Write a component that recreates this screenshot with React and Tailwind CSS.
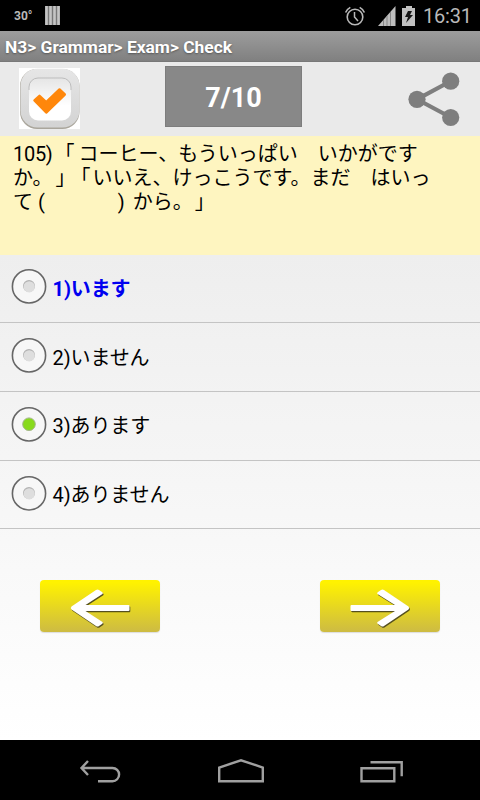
// App.jsx
import React, { useState } from "react";

const OPTIONS = [
  { id: 1, text: "います", correct: true },
  { id: 2, text: "いません" },
  { id: 3, text: "あります" },
  { id: 4, text: "ありません" },
];

function StatusBar() {
  return (
    <div className="flex h-[31px] items-center bg-black text-[#b9b9b9]">
      <span className="ml-[14px] w-[31px] text-[12px] leading-none font-bold">30°</span>
      <svg width="15" height="19" viewBox="0 0 15 19">
        <rect width="15" height="19" fill="#777" />
        <path d="M1.5 0v19M5.5 0v19M9.5 0v19M13.5 0v19" stroke="#c4c4c4" strokeWidth="2.6" />
      </svg>
      <svg className="ml-[284px]" width="22" height="22" viewBox="0 0 22 22" fill="none" stroke="#b9b9b9">
        <circle cx="11" cy="12" r="7.8" strokeWidth="1.6" />
        <path d="M10.5 7v5l3.5 4" strokeWidth="1.5" />
        <path d="M1.6 7.5A10 10 0 0 1 6.3 2.4M15.7 2.4a10 10 0 0 1 4.7 5.1" strokeWidth="1.6" />
      </svg>
      <svg className="ml-[12px]" width="18" height="20" viewBox="0 0 18 20">
        <path d="M17.5 0v20H0z" fill="#bdbdbd" />
        <path d="M5.5 14v6M9 10v10M12.5 6v14" stroke="#858585" />
      </svg>
      <svg className="ml-[6px]" width="14" height="20" viewBox="0 0 14 20">
        <path d="M4 0h6v2h3v18H0V2h4z" fill="#c0c0c0" />
        <path d="M6 5h4L8 9h3l-7 8 2-6H3z" fill="#151515" />
      </svg>
      <span className="ml-[7px] pt-[2px] text-[20px] leading-[29px] tracking-[-0.2px]">16:31</span>
    </div>
  );
}

function Toolbar() {
  return (
    <div className="flex h-[74px] items-start bg-[#eaeaea]">
      <svg className="mt-[6px] ml-[19px]" width="61" height="61" viewBox="0 0 61 61">
        <defs>
          <linearGradient id="frame" x1="0" y1="0" x2="0" y2="1">
            <stop stopColor="#e6e6e6" />
            <stop offset="1" stopColor="#d3d3d3" />
          </linearGradient>
          <linearGradient id="inner" x1="0" y1="0" x2="0" y2="1">
            <stop stopColor="#e5e5e5" />
            <stop offset="0.65" stopColor="#ffffff" />
          </linearGradient>
        </defs>
        <rect width="61" height="61" fill="#fff" />
        <rect x="1" y="1" width="59.5" height="60" rx="17" fill="#aaa69c" />
        <rect x="1.5" y="0.8" width="59" height="58.8" rx="17" fill="url(#frame)" />
        <rect x="10" y="10" width="42" height="42.5" rx="9" fill="url(#inner)" />
        <path d="M10 22V19a9 9 0 0 1 9-9h24a9 9 0 0 1 9 9v3" fill="none" stroke="#bdbdbd" />
        <path d="M15.5 32.5L20.5 27.8L27.2 34.2L40.5 21.5L45.8 26.5L27.2 44.5Z" fill="#ff870b" stroke="#ff870b" strokeWidth="2.5" strokeLinejoin="round" />
      </svg>
      <div className="mt-[4px] ml-[85px] h-[61px] w-[137px] border border-[#7d7d7d] bg-[#888] text-center text-[27px] leading-[62px] font-bold text-white">
        7/10
      </div>
      <svg className="mt-[7px] ml-[105px]" width="54" height="60" viewBox="0 -2 54 60" fill="#7e7e7e">
        <path d="M44 10L10 28.3L44 46.5" fill="none" stroke="#7e7e7e" strokeWidth="4.2" />
        <circle cx="43.7" cy="10.2" r="8.6" />
        <circle cx="10" cy="28.3" r="8.6" />
        <circle cx="43.7" cy="46.5" r="8.6" />
      </svg>
    </div>
  );
}

function Question() {
  return (
    <div className="h-[119px] bg-[#fef5c0] pt-[6px] pl-[13px] text-[20px] leading-[24px] whitespace-pre text-black [text-spacing-trim:space-all]">
      <div>
        <span className="tracking-[-0.3px]">105)</span>
        <span className="ml-[2px] mr-[4px]">「</span>コーヒー、もういっぱい　いかがです
      </div>
      <div>
        か。<span className="ml-[3px] mr-[7px] tracking-[-5px]">」「</span>いいえ、けっこうです。まだ　はいっ
      </div>
      <div>
        て<span className="ml-[5px]">(</span>
        <span className="ml-[73px] mr-[8px]">)</span>から。<span className="ml-[2px]">」</span>
      </div>
    </div>
  );
}

function Radio({ checked }) {
  return (
    <svg width="36" height="36" viewBox="0 0 36 36">
      <circle cx="18" cy="18.4" r="16.6" fill="#f7f7f7" stroke="#666" strokeWidth="1.6" />
      {checked ? (
        <circle cx="18" cy="18.2" r="6.3" fill="#88da1c" stroke="#a3b58a" />
      ) : (
        <>
          <circle cx="18" cy="18" r="6" fill="#b2b2b2" />
          <circle cx="18.2" cy="18.8" r="5.6" fill="#dedede" />
        </>
      )}
    </svg>
  );
}

function Option({ option, checked, onSelect }) {
  return (
    <div
      onClick={() => onSelect(option.id)}
      className="flex h-[68.75px] cursor-pointer items-start border-b border-[#c4c4c4] pt-[14px] pl-[11px]"
    >
      <Radio checked={checked} />
      <span
        className={`mt-[8.5px] ml-[5.5px] text-[20px] leading-[24px] tracking-[-0.1px] ${
          option.correct ? "font-bold text-[#0000f0]" : "text-black"
        }`}
      >
        {option.id}){option.text}
      </span>
    </div>
  );
}

function ArrowButton({ next }) {
  const d = next
    ? "M31.5 25H75L57.5 14Q56.5 13 58 12L61 10Q62.5 9 64 10L88.5 26.5Q90 28 88.5 29.5L64 46Q62.5 47 61 46L58 44Q56.5 43 57.5 42L75 31H31.5Q30.5 31 30.5 30V26Q30.5 25 31.5 25z"
    : "M88.5 25H45.5L62.5 14Q63.5 13 62 12L59 10Q57.5 9 56 10L31.5 26.5Q30 28 31.5 29.5L56 46Q57.5 47 59 46L62 44Q63.5 43 62.5 42L45.5 31H88.5Q89.5 31 89.5 30V26Q89.5 25 88.5 25z";
  return (
    <button className="h-[52px] w-[120px] cursor-pointer rounded-[4px] bg-linear-to-b/srgb from-[#fff200] from-5% to-[#cdbb43] shadow-[0_1px_1px_#ddd]">
      <svg width="120" height="52" viewBox="0 0 120 52">
        <path d={d} transform="translate(0.8 1.2)" fill="#55501f" />
        <path d={d} fill="#fff" />
      </svg>
    </button>
  );
}

function NavBar() {
  return (
    <div className="flex h-[60px] items-center justify-between bg-black pt-[3px] pr-[76px] pl-[79px]">
      <svg width="43" height="26" viewBox="0 0 43 26" fill="none" stroke="#a0a0a0" strokeWidth="2.4">
        <path d="M19 22.2h14.5a6.6 6.6 0 0 0 0-13.2H2M9 2L2.5 9L9 16" />
      </svg>
      <svg className="-ml-px" width="46" height="26" viewBox="0 0 46 26" fill="none" stroke="#a0a0a0" strokeWidth="2.4">
        <path d="M1.2 22.2V8.5L23 1.3L44.8 8.5v13.7z" />
      </svg>
      <svg width="44" height="26" viewBox="0 0 44 26" fill="none" stroke="#a0a0a0" strokeWidth="2.4">
        <path d="M1.5 9.2h32.8v13H1.5zM10.5 3.2h31.2v14" />
      </svg>
    </div>
  );
}

function App() {
  const [selected, setSelected] = useState(3);

  return (
    <div className="flex h-[800px] w-[480px] flex-col overflow-hidden bg-white font-[Roboto,'Noto_Sans_CJK_JP',sans-serif]">
      <StatusBar />
      <div className="h-[32px] border-b-2 border-[#787878] bg-linear-to-b from-[#9d9d9d] to-[#808080] pl-[5px] text-[17.4px] leading-[32px] font-bold text-white [text-shadow:0_1px_2px_#555]">
        N3&gt; Grammar&gt; Exam&gt; Check
      </div>
      <div className="-mt-px">
        <Toolbar />
      </div>
      <Question />

      <div className="flex-1 bg-linear-to-b from-[#eeeeee] to-[#ffffff]">
        <div className="-mt-[0.6px]">
          {OPTIONS.map((option) => (
            <Option
              key={option.id}
              option={option}
              checked={selected === option.id}
              onSelect={setSelected}
            />
          ))}
        </div>
        <div className="mt-[50.6px] flex justify-between px-[40px]">
          <ArrowButton />
          <ArrowButton next />
        </div>
      </div>

      <NavBar />
    </div>
  );
}

export default App;
